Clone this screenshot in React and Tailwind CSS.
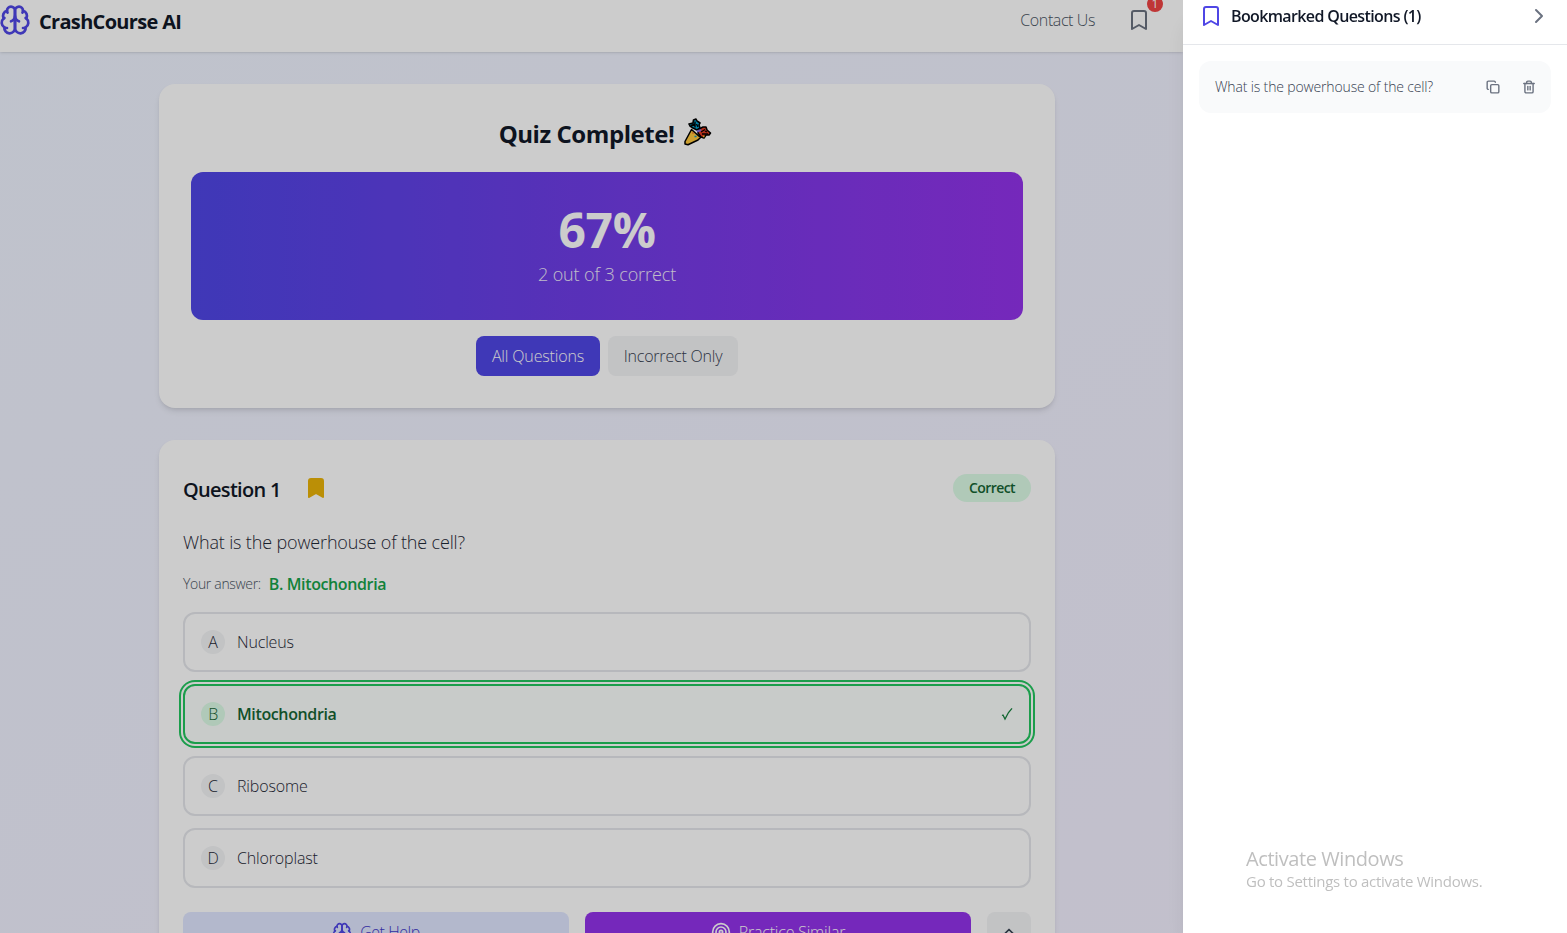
import { useState } from "react";
import {
  Bookmark,
  ChevronRight,
  ChevronUp,
  Copy,
  Target,
  Trash2,
} from "lucide-react";

const options = [
  { id: "A", text: "Nucleus" },
  { id: "B", text: "Mitochondria" },
  { id: "C", text: "Ribosome" },
  { id: "D", text: "Chloroplast" },
];

function BrainIcon({ className }) {
  return (
    <svg
      viewBox="0 0 24 24"
      fill="none"
      stroke="currentColor"
      strokeWidth="2"
      strokeLinecap="round"
      strokeLinejoin="round"
      className={className}
    >
      <path d="M12 5a3 3 0 1 0-5.997.125 4 4 0 0 0-2.526 5.77 4 4 0 0 0 .556 6.588A4 4 0 1 0 12 18Z" />
      <path d="M12 5a3 3 0 1 1 5.997.125 4 4 0 0 1 2.526 5.77 4 4 0 0 1-.556 6.588A4 4 0 1 1 12 18Z" />
      <path d="M15 13a4.5 4.5 0 0 1-3-4 4.5 4.5 0 0 1-3 4" />
      <path d="M17.599 6.5a3 3 0 0 0 .399-1.375" />
      <path d="M6.003 5.125A3 3 0 0 0 6.401 6.5" />
      <path d="M3.477 10.896a4 4 0 0 1 .585-.396" />
      <path d="M19.938 10.5a4 4 0 0 1 .585.396" />
      <path d="M6 18a4 4 0 0 1-1.967-.516" />
      <path d="M19.967 17.484A4 4 0 0 1 18 18" />
    </svg>
  );
}

function PartyIcon() {
  return (
    <svg viewBox="0 0 28 28" className="h-7 w-7 shrink-0" strokeLinejoin="round">
      <path d="M7.5 11.5 16.5 19.5 14 22 4 26.7 1 26 1 23.5Z" fill="#ffc83d" stroke="#000" strokeWidth="1.5" />
      <path d="M5 6 9 5 9.5 2 12 1l1 2 3 2-1 2 1 3-3 2-4-2-3-2Z" fill="#00a6d6" stroke="#000" strokeWidth="1.6" />
      <path d="M7 7.5l4-1.5M11 3.5v6M12.5 6l1.500 3" stroke="#000" strokeWidth="1.4" />
      <path d="m14 13 3-3 2-1h3l1 3 3.500 3-1.500 2h-3l-2 3-3-1-3-4Z" fill="#e33b22" stroke="#000" strokeWidth="1.6" />
      <path d="m17 14 4-2.500M18 16h6M21 13l2 1" stroke="#000" strokeWidth="1.3" />
      <path d="m13 13.500 4-1.500" stroke="#886ce4" strokeWidth="2" />
      <path d="M10.500 18.500h2" stroke="#0099cc" strokeWidth="1.500" />
      <path d="M19 18.500h1.500" stroke="#ffd12e" strokeWidth="1.500" />
      <path d="M8.500 15h1" stroke="#e33b22" strokeWidth="1.500" />
    </svg>
  );
}

function CheckMark() {
  return (
    <svg viewBox="0 0 12 14" fill="none" stroke="currentColor" strokeWidth="1.3" className="h-3.5 w-3 text-[#15803d]">
      <path d="M1 8.500 2 8 4 12 7.500 5.500 11 1.300" />
    </svg>
  );
}

function Header() {
  return (
    <header className="flex h-[52px] items-start justify-between bg-white pr-8 shadow-sm">
      <div className="-ml-px flex items-center gap-2 pt-1">
        <BrainIcon className="h-8 w-8 text-[#4f46e5]" />
        <span className="pt-[3px] text-xl font-bold leading-7 tracking-[-0.68px] text-[#111827]">
          CrashCourse AI
        </span>
      </div>
      <div className="flex items-start gap-8 pt-2">
        <span className="font-light leading-6 tracking-[-0.4px] text-[#4b5563]">Contact Us</span>
        <button className="relative text-[#6b7280]">
          <Bookmark size={24} />
          <span className="absolute -right-3 -top-3 flex h-4 w-4 items-center justify-center rounded-full bg-[#ef4444] text-xs leading-4 text-white">
            1
          </span>
        </button>
      </div>
    </header>
  );
}

function ScoreCard({ filter, setFilter }) {
  return (
    <section className="rounded-2xl bg-white p-8 shadow-md">
      <h2 className="mb-6 flex h-8 items-center justify-center gap-2.5 pr-[3px] text-2xl font-bold text-[#111827]">
        <span className="pt-[3px] tracking-[-0.45px]">Quiz Complete!</span>
        <PartyIcon />
      </h2>
      <div className="mb-4 rounded-xl bg-linear-to-r/srgb from-[#4f46e5] to-[#9333ea] p-8 text-center text-white">
        <div className="mb-2 pt-1 text-5xl font-bold leading-[44px] tracking-[-0.3px]">67%</div>
        <div className="text-lg font-light leading-7 tracking-[-0.1px] opacity-90">
          2 out of 3 correct
        </div>
      </div>
      <div className="flex justify-center gap-2 font-light">
        <button
          onClick={() => setFilter("all")}
          className={`h-10 w-[124px] rounded-lg tracking-[-0.15px] ${
            filter === "all" ? "bg-[#4f46e5] text-white" : "bg-[#f3f4f6] text-[#374151]"
          }`}
        >
          All Questions
        </button>
        <button
          onClick={() => setFilter("incorrect")}
          className={`h-10 w-[130px] rounded-lg tracking-[-0.2px] ${
            filter === "incorrect" ? "bg-[#4f46e5] text-white" : "bg-[#f3f4f6] text-[#374151]"
          }`}
        >
          Incorrect Only
        </button>
      </div>
    </section>
  );
}

function Option({ option, correct }) {
  return (
    <div
      className={`flex h-[60px] items-center rounded-xl border-2 px-4 ${
        correct
          ? "border-[#22c55e] bg-[#fbfefc] font-semibold tracking-[-0.38px] text-[#166534] ring-2 ring-[#22c55e] ring-offset-2"
          : "border-[#e5e7eb] font-light tracking-[-0.15px] text-[#1f2937]"
      }`}
    >
      <span
        className={`mr-3 flex h-6 w-6 items-center justify-center rounded-full font-light ${
          correct ? "bg-[#dcfce7] text-[#166534]" : "bg-[#f3f4f6] text-[#1f2937]"
        }`}
      >
        {option.id}
      </span>
      <span className="flex-1">{option.text}</span>
      {correct && <CheckMark />}
    </div>
  );
}

function QuestionCard() {
  return (
    <section className="h-[560px] rounded-2xl bg-white p-6 shadow-md">
      <div className="flex h-12 items-center justify-between">
        <div className="flex items-center">
          <h3 className="w-[121px] pt-1 text-xl font-semibold leading-7 tracking-[-0.7px] text-[#111827]">
            Question 1
          </h3>
          <Bookmark size={24} fill="currentColor" className="text-[#eab308]" />
        </div>
        <span className="flex h-7 w-[78px] items-center justify-center rounded-full bg-[#dcfce7] text-sm font-semibold tracking-[-0.55px] text-[#166534]">
          Correct
        </span>
      </div>
      <p className="mt-4 text-lg font-light leading-7 tracking-[-0.15px] text-[#1f2937]">
        What is the powerhouse of the cell?
      </p>
      <div className="mb-4 mt-4 flex h-6 items-center gap-2">
        <span className="text-sm font-light tracking-[-0.33px] text-[#4b5563]">Your answer:</span>
        <span className="font-semibold tracking-[-0.38px] text-[#16a34a]">B. Mitochondria</span>
      </div>
      <div className="flex flex-col gap-3">
        {options.map((option) => (
          <Option key={option.id} option={option} correct={option.id === "B"} />
        ))}
      </div>
      <div className="mt-6 flex gap-4 font-light">
        <button className="flex h-10 flex-1 items-center justify-center gap-2 rounded-lg bg-[#e0e7ff] tracking-[-0.45px] text-[#4338ca]">
          <BrainIcon className="h-5 w-5 text-[#4f46e5]" />
          Get Help
        </button>
        <button className="flex h-10 flex-1 items-center justify-center gap-2 rounded-lg bg-[#9333ea] tracking-[-0.2px] text-white">
          <Target size={20} />
          Practice Similar
        </button>
        <button className="flex h-10 w-11 items-center justify-center rounded-lg bg-[#f3f4f6] text-[#374151]">
          <ChevronUp size={20} />
        </button>
      </div>
    </section>
  );
}

function BookmarkDrawer() {
  return (
    <aside className="fixed inset-y-0 right-0 flex w-96 flex-col bg-white shadow-xl">
      <div className="flex h-[45px] items-start justify-between border-b border-[#e5e7eb] px-4 pt-1">
        <div className="flex items-center gap-2">
          <Bookmark size={24} className="text-[#4f46e5]" />
          <h2 className="font-semibold leading-6 tracking-[-0.63px] text-[#111827]">
            Bookmarked Questions (1)
          </h2>
        </div>
        <ChevronRight size={24} className="text-[#6b7280]" />
      </div>
      <div className="flex-1 p-4">
        <div className="flex h-[52px] items-center gap-[22px] rounded-xl bg-[#f9fafb] pl-4 pr-[15px] text-[#6b7280]">
          <span className="flex-1 text-sm font-light tracking-[-0.15px] text-[#374151]">
            What is the powerhouse of the cell?
          </span>
          <Copy size={14} strokeWidth={2.4} />
          <Trash2 size={14} strokeWidth={2.4} />
        </div>
      </div>
      <div className="mb-[41px] ml-[63px] text-[#bfbfbf]">
        <p className="text-xl leading-6 tracking-[-0.42px]">Activate Windows</p>
        <p className="text-[15px] leading-[21px] tracking-[-0.27px]">
          Go to Settings to activate Windows.
        </p>
      </div>
    </aside>
  );
}

function App() {
  const [filter, setFilter] = useState("all");

  return (
    <div className="h-screen overflow-hidden bg-linear-to-br/srgb from-[#eff4ff] to-[#f4f0ff] font-['Open_Sans','Noto_Sans',sans-serif]">
      <div className="w-[1183px]">
        <Header />
        <main className="ml-[159px] flex w-[896px] flex-col gap-8 pt-8">
          <ScoreCard filter={filter} setFilter={setFilter} />
          <QuestionCard />
        </main>
      </div>
      <div className="fixed inset-0 bg-black/20" />
      <BookmarkDrawer />
    </div>
  );
}

export default App;
